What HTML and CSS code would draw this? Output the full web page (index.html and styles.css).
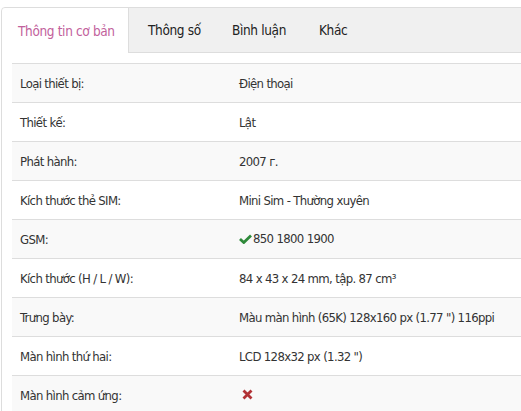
FILE: index.html
```html
<!DOCTYPE html>
<html lang="vi">
<head>
<meta charset="utf-8">
<title>Thông tin cơ bản</title>
<link rel="stylesheet" href="styles.css">
</head>
<body>
<div class="box">
  <div class="tabs">
    <div class="tab active">Thông tin cơ bản</div>
    <div class="tab t2">Thông số</div>
    <div class="tab t3">Bình luận</div>
    <div class="tab t4">Khác</div>
  </div>
  <div class="panel">
    <table class="spec">
      <colgroup><col class="ck"><col></colgroup>
      <tr><td>Loại thiết bị:</td><td>Điện thoại</td></tr>
      <tr><td>Thiết kế:</td><td>Lật</td></tr>
      <tr><td>Phát hành:</td><td>2007 г.</td></tr>
      <tr><td>Kích thước thẻ SIM:</td><td>Mini Sim - Thường xuyên</td></tr>
      <tr><td>GSM:</td><td><span class="ok"><svg width="13" height="10" viewBox="0 0 13 10"><path d="M1 5 L4.8 8.5 L12 1.5" fill="none" stroke="#2f8a3a" stroke-width="2.8"/></svg></span>850 1800 1900</td></tr>
      <tr><td>Kích thước (H / L / W):</td><td>84 x 43 x 24 mm, tập. 87 cm³</td></tr>
      <tr><td>Trưng bày:</td><td>Màu màn hình (65K) 128x160 px (1.77 ") 116ppi</td></tr>
      <tr><td>Màn hình thứ hai:</td><td>LCD 128x32 px (1.32 ")</td></tr>
      <tr><td>Màn hình cảm ứng:</td><td><span class="no"><svg width="11" height="11" viewBox="0 0 11 11"><path d="M1.5 1.5 L9.5 9.5 M9.5 1.5 L1.5 9.5" stroke="#b23236" stroke-width="2.8"/></svg></span></td></tr>
    </table>
  </div>
</div>
</body>
</html>
```
FILE: styles.css
```css
html, body {
  margin: 0;
  padding: 0;
  background: #fff;
}
body {
  padding: 7px 0 0 1px;
  font-family: "DejaVu Sans Condensed", "Liberation Sans", sans-serif;
  font-size: 13px;
  letter-spacing: -0.65px;
  color: #333;
  overflow: hidden;
}
.box {
  width: 560px;
  border: 1px solid #ddd;
  border-radius: 4px 0 0 0;
  background: #fff;
}
.tabs {
  display: flex;
  height: 44px;
  background: #f0f0f0;
  border-bottom: 1px solid #ddd;
  border-radius: 4px 0 0 0;
  font-size: 13.5px;
  letter-spacing: -0.35px;
}
.tab {
  display: flex;
  align-items: center;
  box-sizing: border-box;
  padding-left: 19px;
  white-space: nowrap;
  color: #222;
}
.tab.active {
  width: 127px;
  padding-left: 16px;
  background: #fff;
  color: #c2619c;
  border-right: 1px solid #ddd;
  margin-bottom: -1px;
  border-radius: 4px 0 0 0;
}
.t2 { width: 84px; }
.t3 { width: 87px; }
.t4 { width: 80px; }
.panel {
  padding: 10px 0 0 10px;
}
.spec {
  width: 560px;
  table-layout: fixed;
  border-collapse: collapse;
  border-top: 1px solid #ddd;
}
.ck { width: 219px; }
.spec td {
  height: 38px;
  padding: 0 8px;
  border-bottom: 1px solid #ddd;
  vertical-align: middle;
  white-space: nowrap;
}
.spec tr:nth-child(odd) td {
  background: #f9f9f9;
}
.ok, .no {
  display: inline-block;
  vertical-align: -1px;
}
.ok { margin-right: 1px; }
.no { margin-left: 3px; }
```
